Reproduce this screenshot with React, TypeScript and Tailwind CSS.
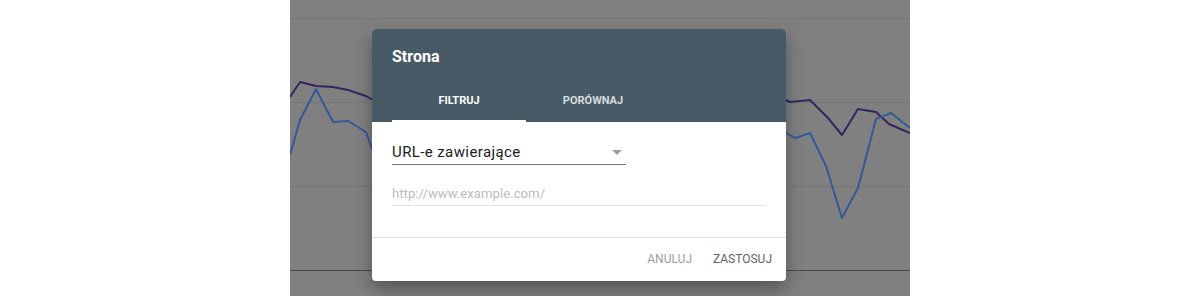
import React from "react";

const purple = "0,97 10,82 26,86 43,87 58,90 76,96 100,110 200,120 300,110 400,100 496,100 500,102 520,100 538,118 552,135 568,109 586,112 599,124 620,133";
const blue = "0,155 10,120 26,89 43,122 58,121 76,132 90,170 200,180 300,160 400,140 496,133 505,138 520,133 536,166 552,218 568,188 586,119 601,113 620,128";

export default function App() {
  return (
    <div className="w-[1200px] h-[296px] bg-white flex justify-center overflow-hidden" style={{ fontFamily: "Roboto, 'Noto Sans', sans-serif" }}>
      <div className="relative w-[620px] h-[296px] bg-[#808080]">
        <svg className="absolute inset-0" width="620" height="296" viewBox="0 0 620 296">
          <line x1="0" y1="18.5" x2="620" y2="18.5" stroke="#767676" strokeWidth="1" />
          <line x1="0" y1="102.5" x2="620" y2="102.5" stroke="#767676" strokeWidth="1" />
          <line x1="0" y1="186.5" x2="620" y2="186.5" stroke="#767676" strokeWidth="1" />
          <line x1="0" y1="270.5" x2="620" y2="270.5" stroke="#4a4a4a" strokeWidth="1" />
          <polyline points={purple} fill="none" stroke="#35265e" strokeWidth="2" strokeLinejoin="round" />
          <polyline points={blue} fill="none" stroke="#34599a" strokeWidth="2" strokeLinejoin="round" />
        </svg>
        <div className="absolute left-[82px] top-[29px] w-[414px] bg-white rounded-[4px] shadow-[0_8px_18px_rgba(0,0,0,0.35)] overflow-hidden">
          <div className="bg-[#475a65] h-[93px] flex flex-col">
            <div className="pl-[20px] pt-[16px] h-[53px] text-white text-[16px] font-bold leading-[24px]">Strona</div>
            <div className="flex pl-[20px] h-[40px]">
              <div className="w-[134px] flex flex-col">
                <div className="flex-1 flex items-center justify-center text-white text-[11px] font-bold">FILTRUJ</div>
                <div className="h-[2px] bg-white" />
              </div>
              <div className="w-[134px] flex items-center justify-center pb-[2px] text-[#d5dbde] text-[11px] font-bold">PORÓWNAJ</div>
            </div>
          </div>
          <div className="px-[20px]">
            <div className="mt-[18px] w-[234px] h-[25px] flex items-center justify-between border-b border-[#757575]">
              <span className="text-[15px] text-[#212121] tracking-[0.4px]">URL-e zawierające</span>
              <svg width="10" height="5" viewBox="0 0 10 5" className="mr-[4px]"><path d="M0 0 L10 0 L5 5 Z" fill="#9e9e9e" /></svg>
            </div>
            <div className="mt-[18px] w-[374px] h-[23px] flex items-center border-b border-[#e0e0e0]">
              <span className="text-[13.2px] text-[#bdbdbd]">http://www.example.com/</span>
            </div>
          </div>
          <div className="mt-[31px] border-t border-[#e0e0e0] h-[44px] flex items-center justify-end gap-[21px] pr-[14px] pb-[2px]">
            <span className="text-[12px] text-[#9e9e9e]">ANULUJ</span>
            <span className="text-[12px] text-[#5f6368]">ZASTOSUJ</span>
          </div>
        </div>
      </div>
    </div>
  );
}
